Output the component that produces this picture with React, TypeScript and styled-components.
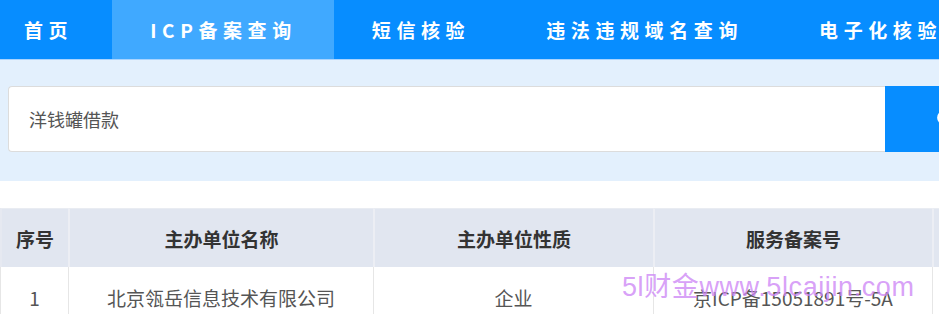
import React from 'react';
import styled, { createGlobalStyle } from 'styled-components';

const GlobalStyle = createGlobalStyle`
  html, body {
    margin: 0;
    padding: 0;
    background: #fff;
  }
  body {
    font-family: "Noto Sans CJK SC", "Microsoft YaHei", sans-serif;
    color: #333;
  }
`;

const Page = styled.div`
  width: 939px;
  overflow: hidden;
`;

const Nav = styled.nav`
  display: flex;
  height: 59px;
  background-color: #078dff;
  border-bottom: 1px solid #a9d4ff;
  white-space: nowrap;
`;

const NavItem = styled.a<{ $active?: boolean; $first?: boolean }>`
  display: flex;
  align-items: center;
  flex-shrink: 0;
  padding: 0 ${(p) => (p.$active ? '37px' : p.$first ? '39px' : '38px')} 0 ${(p) => (p.$first ? '24px' : '38px')};
  background-color: ${(p) => (p.$active ? '#40a9ff' : 'transparent')};
  color: #fff;
  font-size: 19px;
  font-weight: 700;
  letter-spacing: 5.6px;
  text-decoration: none;
`;

const SearchBand = styled.section`
  background-color: #e3f0fd;
  padding: 26px 0 29px 8px;
`;

const SearchBox = styled.div`
  display: flex;
  height: 66px;
`;

const SearchInput = styled.div`
  flex: 0 0 877px;
  box-sizing: border-box;
  display: flex;
  align-items: center;
  padding-left: 20px;
  background: #fff;
  border: 1px solid #dcdcdc;
  border-right: none;
  border-radius: 4px 0 0 4px;
  font-size: 18px;
  color: #555;
`;

const SearchButton = styled.button`
  flex: 0 0 120px;
  display: flex;
  align-items: center;
  padding: 0 0 0 50px;
  border: none;
  background-color: #078dff;
  color: #fff;
  font-size: 18px;
`;

const TableWrap = styled.div`
  position: relative;
  margin-top: 27px;
`;

const Grid = styled.div`
  display: grid;
  grid-template-columns: 68px 305px 280px 279px 168px;
  width: 1100px;
  font-size: 19px;
`;

const HeadCell = styled.div<{ $first?: boolean }>`
  box-sizing: border-box;
  height: 59px;
  display: flex;
  align-items: center;
  justify-content: center;
  background-color: #e1e6f0;
  border-top: 1px solid #e9ecf2;
  border-left: 2px solid ${(p) => (p.$first ? '#e6e9f1' : '#eceef4')};
  font-weight: 700;
  color: #333;
`;

const Cell = styled.div`
  box-sizing: border-box;
  height: 60px;
  display: flex;
  align-items: center;
  justify-content: center;
  border-left: 1px solid #e6e6e6;
  color: #555;
`;

const Watermark = styled.div`
  position: absolute;
  left: 622px;
  top: 57px;
  font-family: "Liberation Sans", Arial, "Noto Sans CJK SC", sans-serif;
  font-size: 27px;
  letter-spacing: 0.6px;
  color: rgba(206, 136, 246, 0.8);
  white-space: nowrap;
  pointer-events: none;
`;

const tabs = ['首页', 'ICP备案查询', '短信核验', '违法违规域名查询', '电子化核验', '备案查询'];
const cols = ['序号', '主办单位名称', '主办单位性质', '服务备案号', '审核时间'];
const row = ['1', '北京瓴岳信息技术有限公司', '企业', '京ICP备15051891号-5A', '2023-05-17'];

const SearchIcon = () => (
  <svg width="22" height="22" viewBox="0 0 24 24" fill="none" stroke="#fff" strokeWidth="2.4">
    <circle cx="10.5" cy="10.5" r="7" />
    <path d="M16 16l5 5" />
  </svg>
);

export default function App() {
  return (
    <Page>
      <GlobalStyle />
      <Nav>
        {tabs.map((t, i) => (
          <NavItem key={t} $first={i === 0} $active={i === 1}>
            {t}
          </NavItem>
        ))}
      </Nav>
      <SearchBand>
        <SearchBox>
          <SearchInput>洋钱罐借款</SearchInput>
          <SearchButton>
            <SearchIcon />
          </SearchButton>
        </SearchBox>
      </SearchBand>
      <TableWrap>
        <Grid>
          {cols.map((c, i) => (
            <HeadCell key={c} $first={i === 0}>
              {c}
            </HeadCell>
          ))}
          {row.map((v) => (
            <Cell key={v}>{v}</Cell>
          ))}
        </Grid>
        <Watermark>5l财金www.5lcaijin.com</Watermark>
      </TableWrap>
    </Page>
  );
}
